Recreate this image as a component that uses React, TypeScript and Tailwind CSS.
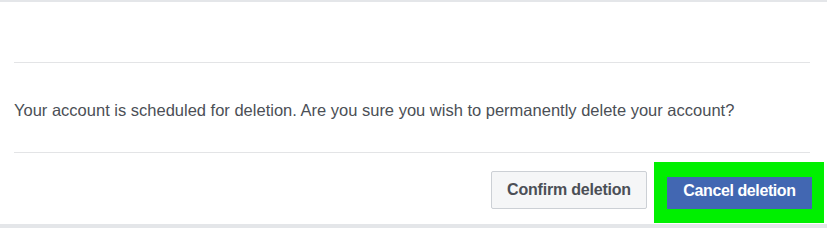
export default function App() {
  return (
    <div
      className="w-[827px] h-[228px] bg-white border-t-2 border-[#e4e6e9] flex flex-col overflow-hidden"
      style={{ fontFamily: '"Liberation Sans", Arial, sans-serif' }}
    >
      <div className="h-[60px] shrink-0" />
      <div className="ml-[14px] mr-[17px] h-[91px] shrink-0 border-t border-b border-[#e3e4e6] flex items-center">
        <p className="text-[16.5px] text-[#4b4f56] tracking-[0px] pt-[6px]">
          Your account is scheduled for deletion. Are you sure you wish to permanently delete your account?
        </p>
      </div>
      <div className="flex justify-end items-start pt-[9px] pr-[3px] h-[71px] shrink-0">
        <button className="mt-[9px] h-[38px] w-[156px] bg-[#f5f6f7] border border-[#ccd0d5] rounded-[2px] text-[16px] font-bold text-[#4b4f56] tracking-[-0.2px]">
          Confirm deletion
        </button>
        <div className="ml-[7px] bg-[#00f000] pt-[15px] pb-[14px] pl-[13px] pr-[12px]">
          <button className="h-[32px] w-[145px] bg-[#4267b2] border border-[#4267b2] text-[16px] font-bold text-white tracking-[-0.4px] pb-[4px]">
            Cancel deletion
          </button>
        </div>
      </div>
      <div className="flex-1 bg-[#e4e6e9]" />
    </div>
  );
}
